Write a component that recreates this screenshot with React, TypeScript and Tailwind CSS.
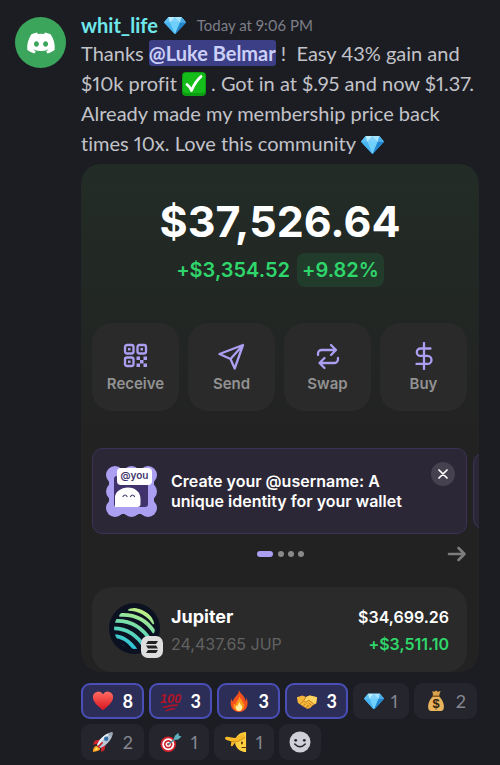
import React from "react";
import { FaDiscord } from "react-icons/fa";

type IconProps = { className?: string };

function Gem({ className }: IconProps) {
  return (
    <svg viewBox="0 0 24 20" className={className} aria-hidden="true">
      <path d="M5 1h14l5 6-12 13L0 7z" fill="#3aa5e8" />
      <path d="M5 1h14l5 6H0z" fill="#8fdcff" />
      <path d="M5 1L0 7h6.500z" fill="#5cc0f5" />
      <path d="M5 1l1.500 6L12 1z" fill="#b9ecff" />
      <path d="M12 1l-5.500 6h11z" fill="#7fd3fb" />
      <path d="M12 1l5.500 6L19 1z" fill="#a8e6ff" />
      <path d="M19 1l5 6h-6.500z" fill="#4aaeea" />
      <path d="M0 7h6.500L12 20z" fill="#49b4f0" />
      <path d="M6.500 7h11L12 20z" fill="#6fd0fb" />
      <path d="M17.500 7H24L12 20z" fill="#2287cf" />
    </svg>
  );
}

function CheckMark({ className }: IconProps) {
  return (
    <svg viewBox="0 0 24 24" className={className} aria-hidden="true">
      <rect width="24" height="24" rx="4" fill="#0c9d12" />
      <rect x="1" y="1" width="22" height="20" rx="3" fill="#15bd1b" />
      <path d="M5 12.500c2 1.500 3.500 3.500 4.500 6C12 12.500 14.500 8.500 19 4.500" fill="none" stroke="#fff" strokeWidth="2.800" strokeLinejoin="round" strokeLinecap="round" />
    </svg>
  );
}

function Heart() {
  return (
    <svg viewBox="0 0 24 24" className="size-[22px]" aria-hidden="true">
      <defs>
        <linearGradient id="heart" x1="0" y1="0" x2="0" y2="1">
          <stop offset="0" stopColor="#ff6b60" />
          <stop offset="1" stopColor="#d8141f" />
        </linearGradient>
      </defs>
      <path d="M12 22C7 18 1 13.500 1 8a6 6 0 0 1 11-3.500A6 6 0 0 1 23 8c0 5.500-6 10-11 14z" fill="url(#heart)" />
    </svg>
  );
}

function Hundred() {
  return (
    <svg viewBox="0 0 24 24" className="size-[22px]" aria-hidden="true">
      <text x="11.500" y="14" textAnchor="middle" fontSize="14" fontWeight="700" fontStyle="italic" fill="#b01426" fontFamily="'Liberation Sans', sans-serif">100</text>
      <path d="M4 19q7-2.500 15-2.500M7 22.500q4-1.800 9-2" fill="none" stroke="#b01426" strokeWidth="1.700" strokeLinecap="round" />
    </svg>
  );
}

function Fire() {
  return (
    <svg viewBox="0 0 24 24" className="size-[22px]" aria-hidden="true">
      <path d="M12 0c1 4 8 7.500 6.500 12 1-.5 1.500-2 1.500-3.500 3 6 1.500 15-7.500 15.500C4 24 1 16 4 9c0 2 .5 3 1.500 3.500C5.500 8 12 6 12 0z" fill="#f4511e" />
      <path d="M12.500 7c1 3 4.500 5 3.500 8.500l1.500-1.500c1 4.500-1.500 9-5.500 9-5 0-7-4.500-5.500-8.500 .5 1 1 1.500 2 2C8.500 12.500 12 11 12.500 7z" fill="#ff9d1c" />
      <path d="M12.500 13c.5 2.500 3 3.500 3 6 0 2-1.500 4-3.500 4S8.500 21 8.500 19c0-1 .5-1.500 1-2l1 1c0-2 1.500-3 2-5z" fill="#fff0a0" />
    </svg>
  );
}

function Handshake() {
  return (
    <svg viewBox="0 0 24 24" className="size-[22px]" aria-hidden="true">
      <path d="M1 8l6-2 4 1.500L15 6l8 2-1 7-3 1-4 4-3 .5L5 16l-3-2z" fill="#f6b73c" />
      <path d="M11 7.500l4-1.500 8 2-1 6-3 1-5-4-3 2c-2 0-2.500-1-2-2z" fill="#ffd460" />
      <path d="M11 7.500l-2.500 3.800c0 1.500 1.500 1.900 2.500 1.700l3-2 5 4M5 15l3-3M8 17.500l2.500-2.500M11 19.500l2-2M14 14.500l2.500 2M12.500 16.500l2 1.800" fill="none" stroke="#b87413" strokeWidth=".9" strokeLinecap="round" />
    </svg>
  );
}

function MoneyBag() {
  return (
    <svg viewBox="0 0 24 24" className="size-[22px]" aria-hidden="true">
      <path d="M8 1l2 1 2-1.500L14 2l3-1-2 6H9z" fill="#d9a24a" />
      <path d="M9 7h6c4 3 6 8 5.500 12.500-.3 2.500-2 3.500-4 3.500h-9c-2 0-3.700-1-4-3.500C3 15 5 10 9 7z" fill="#e8b45c" />
      <path d="M8.500 6.800h7" stroke="#8a5a1e" strokeWidth="1.600" strokeLinecap="round" />
      <text x="12" y="20" textAnchor="middle" fontSize="14" fontWeight="700" fill="#33220d" fontFamily="'Liberation Sans', sans-serif">$</text>
    </svg>
  );
}

function Rocket() {
  return (
    <svg viewBox="0 0 24 24" className="size-[22px]" aria-hidden="true">
      <path d="M1 23c0-4 1.500-7 4.500-7L9 19c0 2.500-4 3-8 4z" fill="#ff9a1f" />
      <path d="M2.500 21.500c.5-2 1.500-3.500 3-3.500l1.500 1c-.5 1.500-2.500 2-4.500 2.500z" fill="#ffe25a" />
      <path d="M10 9L3 10.500 1 15l5-1zM15 14l-1.500 7L10 23v-5z" fill="#d3232d" />
      <path d="M22.500 1.500C16 1.500 9 7 5.500 15l3.500 3.500C17 15 22.500 8 22.500 1.500z" fill="#b9c6d4" />
      <path d="M22.500 1.500C16 1.500 9 7 5.500 15l1.500 1.500C11 9 16 5 22.500 1.500z" fill="#e6edf3" />
      <path d="M22.500 1.500c-2 0-4 .5-5.500 1.500l4 4c1-1.500 1.500-3.500 1.500-5.500z" fill="#9aa5b3" />
      <circle cx="15.500" cy="8.500" r="2.400" fill="#2e6da8" />
      <path d="M7 17l4-4" stroke="#c3222c" strokeWidth="1.800" strokeLinecap="round" />
    </svg>
  );
}

function Target() {
  return (
    <svg viewBox="0 0 24 24" className="size-[22px]" aria-hidden="true">
      <circle cx="9" cy="14.500" r="8.500" fill="#d4242e" />
      <circle cx="9" cy="14.500" r="6.500" fill="#fff" />
      <circle cx="9" cy="14.500" r="4.600" fill="#d4242e" />
      <circle cx="9" cy="14.500" r="2.800" fill="#fff" />
      <circle cx="9" cy="14.500" r="1.300" fill="#d4242e" />
      <path d="M9 14.500l9-7" stroke="#4a8f9e" strokeWidth="1.600" />
      <path d="M15 9.500l1-4 4-3.500.5 3 3 1-4 3.500z" fill="#5fb0bf" />
    </svg>
  );
}

function Salute() {
  return (
    <svg viewBox="0 0 24 24" className="size-[22px]" aria-hidden="true">
      <path d="M23 1v22c-6.500 0-12-4.500-12-11S16.500 1 23 1z" fill="#ffcf3d" />
      <path d="M0 8c0-1.500 2-2 4-1.500l7 1L20 3l2 4-7 4-3 .5-4 5c-1.500.5-2-.5-1.500-2L7 11.500l-4.500-1.500C.5 9.500 0 9 0 8z" fill="#f7b928" />
      <path d="M7 11.500q5 .5 8-.5l7-4" fill="none" stroke="#c98714" strokeWidth=".9" />
      <ellipse cx="18.500" cy="13" rx="1.100" ry="1.600" fill="#5b3510" />
      <path d="M18.500 18h4.500" stroke="#5b3510" strokeWidth="1.200" strokeLinecap="round" />
    </svg>
  );
}

function Smiley() {
  return (
    <svg viewBox="0 0 22 22" className="size-[22px]" aria-hidden="true">
      <circle cx="11" cy="11" r="10.500" fill="#cfcfd9" />
      <circle cx="6.700" cy="9.300" r="1.400" fill="#25262d" />
      <circle cx="15.300" cy="9.300" r="1.400" fill="#25262d" />
      <path d="M5.800 13q5.200 5.500 10.400 0" fill="none" stroke="#25262d" strokeWidth="1.600" strokeLinecap="round" />
    </svg>
  );
}

const stroke = {
  fill: "none",
  stroke: "#ab9ff2",
  strokeWidth: 2.3,
  strokeLinecap: "round" as const,
  strokeLinejoin: "round" as const,
};

function ReceiveIcon() {
  return (
    <svg viewBox="0 0 28 28" className="size-7" aria-hidden="true">
      <g {...stroke}>
        <rect x="3" y="3" width="8.500" height="8.500" rx="2" />
        <rect x="15.500" y="3" width="8.500" height="8.500" rx="2" />
        <rect x="3" y="15.500" width="8.500" height="8.500" rx="2" />
      </g>
      <g fill="#ab9ff2">
        <rect x="6" y="6" width="2.500" height="2.500" />
        <rect x="18.500" y="6" width="2.500" height="2.500" />
        <rect x="6" y="18.500" width="2.500" height="2.500" />
        <rect x="14.500" y="14.500" width="3.500" height="3.500" />
        <rect x="21.500" y="14.500" width="3.500" height="3.500" />
        <rect x="18" y="18" width="3.500" height="3.500" />
        <rect x="14.500" y="21.500" width="3.500" height="3.500" />
        <rect x="21.500" y="21.500" width="3.500" height="3.500" />
      </g>
    </svg>
  );
}

function SendIcon() {
  return (
    <svg viewBox="0 0 28 28" className="size-7" aria-hidden="true">
      <path {...stroke} d="M25 3L1.500 12l11 5 4.200 9.500zM25 3L12.500 17" />
    </svg>
  );
}

function SwapIcon() {
  return (
    <svg viewBox="0 0 28 28" className="size-7" aria-hidden="true">
      <path {...stroke} d="M4 13v-1.500a3.500 3.500 0 0 1 3.500-3.500H22M17 3l5 5-5 5M24 16v1a4 4 0 0 1-4 4H5.500M10.500 16l-5 5 5 5" />
    </svg>
  );
}

function BuyIcon() {
  return (
    <svg viewBox="0 0 28 28" className="size-7" aria-hidden="true">
      <path {...stroke} d="M14 1v26M20.500 6.500H10.500a3.700 3.700 0 0 0 0 7.400h7a4 4 0 0 1 0 8H6.500" />
    </svg>
  );
}

function UsernameSticker() {
  return (
    <svg viewBox="0 0 51 51" className="size-[51px] shrink-0" aria-hidden="true">
      <g fill="#ab9ff2">
        <rect x="3" y="3" width="45" height="45" rx="4" />
        <circle cx="9" cy="9" r="9" />
        <circle cx="42" cy="9" r="9" />
        <circle cx="9" cy="42" r="9" />
        <circle cx="42" cy="42" r="9" />
        <circle cx="9" cy="25.500" r="9" />
        <circle cx="42" cy="25.500" r="9" />
        <circle cx="25.500" cy="9" r="9" />
        <circle cx="25.500" cy="42" r="9" />
      </g>
      <rect x="8" y="10" width="34" height="31" rx="3" fill="#40336c" />
      <path d="M9 41V31c0-5 6-9.500 13-9.500S34.500 26 34.500 33v5c0 2-1 3-3 3z" fill="#fff" />
      <path d="M17 30.500q2-3 4 0M24.500 30.500q2-3 4 0" fill="none" stroke="#40336c" strokeWidth="1.200" strokeLinecap="round" />
      <rect x="11" y="2" width="35" height="17" rx="4" fill="#fff" />
      <text x="28.500" y="13" textAnchor="middle" fontSize="10" fontWeight="600" fill="#40336c" fontFamily="Inter, sans-serif">@you</text>
    </svg>
  );
}

function JupiterLogo() {
  return (
    <svg viewBox="88 85 150 150" className="size-[51px]" aria-hidden="true">
      <defs>
        <linearGradient id="jup" gradientUnits="userSpaceOnUse" x1="190" y1="100" x2="145" y2="220">
          <stop offset="0" stopColor="#cdf27c" />
          <stop offset="0.500" stopColor="#6fdcae" />
          <stop offset="1" stopColor="#22bfe0" />
        </linearGradient>
        <clipPath id="planet">
          <circle cx="163" cy="160" r="60" />
        </clipPath>
      </defs>
      <circle cx="163" cy="160" r="75" fill="#0c1122" />
      <g clipPath="url(#planet)" fill="none" stroke="url(#jup)" strokeWidth="11">
        <path d="M145 102Q195 104 222 145" />
        <path d="M118 120Q187 115 222 172" />
        <path d="M100 138Q172 132 212 198" />
        <path d="M95 160Q155 156 194 216" />
        <path d="M95 183Q135 178 168 225" />
        <path d="M98 206Q122 204 140 228" />
      </g>
    </svg>
  );
}

function SolanaBadge() {
  return (
    <svg viewBox="0 0 22 22" className="absolute -right-[3px] -bottom-[4px] size-[22px]" aria-hidden="true">
      <rect width="22" height="22" rx="7" fill="#dedede" />
      <path d="M7 5h10l-2 3H5zM5 9.500h10l2 3H7zM7 14h10l-2 3H5z" fill="#222" />
    </svg>
  );
}

const actions = [
  { label: "Receive", icon: <ReceiveIcon /> },
  { label: "Send", icon: <SendIcon /> },
  { label: "Swap", icon: <SwapIcon /> },
  { label: "Buy", icon: <BuyIcon /> },
];

const reactions = [
  { name: "heart", icon: <Heart />, count: 8, mine: true },
  { name: "hundred", icon: <Hundred />, count: 3, mine: true },
  { name: "fire", icon: <Fire />, count: 3, mine: true },
  { name: "handshake", icon: <Handshake />, count: 3, mine: true },
  { name: "gem", icon: <Gem className="w-5" />, count: 1, mine: false },
  { name: "money bag", icon: <MoneyBag />, count: 2, mine: false },
  { name: "rocket", icon: <Rocket />, count: 2, mine: false },
  { name: "target", icon: <Target />, count: 1, mine: false },
  { name: "salute", icon: <Salute />, count: 1, mine: false },
];

function WalletCard() {
  return (
    <section className="mt-[6px] overflow-hidden rounded-[20px] bg-[#222222] bg-linear-to-b from-[#222c26] to-[#222222] to-55% font-[Inter,sans-serif]">
      <div className="flex flex-col items-center pt-8">
        <div className="text-[43px] leading-[50px] font-bold text-white">$37,526.64</div>
        <div className="mt-[7px] flex items-center gap-[7px] text-[20px] leading-[34px] font-semibold text-[#2fd66b]">
          <span>+$3,354.52</span>
          <span className="rounded-lg bg-[#223c2b] px-[5px]">+9.82%</span>
        </div>
      </div>

      <div className="mr-3 ml-[11px] mt-9 grid grid-cols-4 gap-[9px]">
        {actions.map((a) => (
          <button key={a.label} type="button" className="flex h-[88px] flex-col items-center rounded-[20px] bg-[#2a2a2a] pt-[19px] text-[15px] leading-7 font-semibold text-[#929292]">
            {a.icon}
            {a.label}
          </button>
        ))}
      </div>

      <div className="mt-[37px] flex items-center gap-[6px] overflow-hidden pl-[11px]">
        <div className="flex h-[86px] w-[calc(100%-12px)] shrink-0 gap-[14px] rounded-[10px] border border-[#3b3256] bg-[#2c2736] pr-[11px] pl-[13px]">
          <div className="flex flex-1 items-center gap-[14px]">
            <UsernameSticker />
            <p className="text-[16px] leading-5 font-semibold text-white">
              Create your @username: A<br />unique identity for your wallet
            </p>
          </div>
          <button type="button" aria-label="Close" className="mt-[13px] flex size-6 items-center justify-center rounded-full bg-[#46414f]">
            <svg viewBox="0 0 10 10" className="size-[10px]" aria-hidden="true">
              <path d="M1 1l8 8M9 1L1 9" stroke="#fff" strokeWidth="1.700" strokeLinecap="round" />
            </svg>
          </button>
        </div>
        <div className="h-[76px] w-20 shrink-0 rounded-[10px] border border-[#3b3256] bg-[#2c2736]" />
      </div>

      <div className="mx-3 mt-[10px] grid grid-cols-[1fr_auto_1fr] items-center">
        <div className="col-start-2 flex items-center gap-1">
          <span className="h-[6px] w-4 rounded-full bg-[#ab9ff2]" />
          <span className="ml-px size-[6px] rounded-full bg-[#8a8a8a]" />
          <span className="size-[6px] rounded-full bg-[#8a8a8a]" />
          <span className="size-[6px] rounded-full bg-[#8a8a8a]" />
        </div>
        <button type="button" aria-label="Next" className="justify-self-end">
          <svg viewBox="0 0 20 20" className="size-5" aria-hidden="true">
            <path d="M2 10h15.500M11.500 4l6 6-6 6" fill="none" stroke="#7d7d7d" strokeWidth="2.600" strokeLinecap="round" strokeLinejoin="round" />
          </svg>
        </button>
      </div>

      <div className="mr-3 ml-[11px] mt-[23px] flex h-[85px] gap-[11px] rounded-[20px] bg-[#2a2a2a] pt-4 pr-[18px] pl-[17px]">
        <div className="relative size-[51px]">
          <JupiterLogo />
          <SolanaBadge />
        </div>
        <div className="flex-1">
          <div className="text-[18px] leading-7 font-bold text-white">Jupiter</div>
          <div className="text-[16px] leading-[26px] text-[#626262]">24,437.65 JUP</div>
        </div>
        <div className="text-right text-[16px] font-semibold">
          <div className="leading-7 text-white">$34,699.26</div>
          <div className="leading-[26px] text-[#2fd66b]">+$3,511.10</div>
        </div>
      </div>
    </section>
  );
}

export default function App() {
  return (
    <main className="min-h-screen bg-[#1c1d23] font-[Lato,sans-serif] proportional-nums [font-variant-ligatures:none]">
      <article className="flex gap-[15px] pt-3 pr-[21px] pb-1 pl-[15px]">
        <div className="mt-[5px] flex size-[51px] shrink-0 items-center justify-center rounded-full bg-[#3ba55c]">
          <FaDiscord className="size-[30px] text-white" />
        </div>
        <div className="min-w-0 flex-1">
          <header className="flex h-[26px] items-center gap-[6px]">
            <h1 className="text-[20px] font-bold text-[#6fe8ec]">whit_life</h1>
            <Gem className="w-[22px]" />
            <time className="ml-[5px] text-[15px] text-[#7d7e88]">Today at 9:06 PM</time>
          </header>
          <p className="text-[20px] leading-[30px] whitespace-nowrap text-[#c2c3c9]">
            Thanks <a href="#luke" className="rounded-[3px] bg-[#3c3f85] py-px font-bold text-[#ccd0f8]">@Luke Belmar</a> !&nbsp; Easy 43% gain and
            <br />
            $10k profit <CheckMark className="inline-block size-6 align-[-5px]" /> . Got in at $.95 and now $1.37.
            <br />
            Already made my membership price back
            <br />
            times 10x. Love this community <Gem className="inline-block w-[23px] align-[-3px]" />
          </p>
          <WalletCard />
          <div className="mt-[11px] flex flex-wrap gap-[5px]">
            {reactions.map((r) => (
              <button
                key={r.name}
                type="button"
                aria-label={`${r.name}, ${r.count}`}
                className={`flex h-9 items-center justify-between rounded-[9px] border-2 px-[9px] text-[18px] ${
                  r.mine ? "border-[#4a4fb8] bg-[#2c2e58] font-bold text-white" : "border-[#25262d] bg-[#25262d] text-[#868791]"
                } ${r.name === "gem" ? "w-14" : r.count === 1 ? "w-[60px]" : "w-[63px]"}`}
              >
                {r.icon}
                <span>{r.count}</span>
              </button>
            ))}
            <button type="button" aria-label="Add reaction" className="flex h-9 w-[42px] items-center justify-center rounded-[9px] bg-[#25262d]">
              <Smiley />
            </button>
          </div>
        </div>
      </article>
    </main>
  );
}
